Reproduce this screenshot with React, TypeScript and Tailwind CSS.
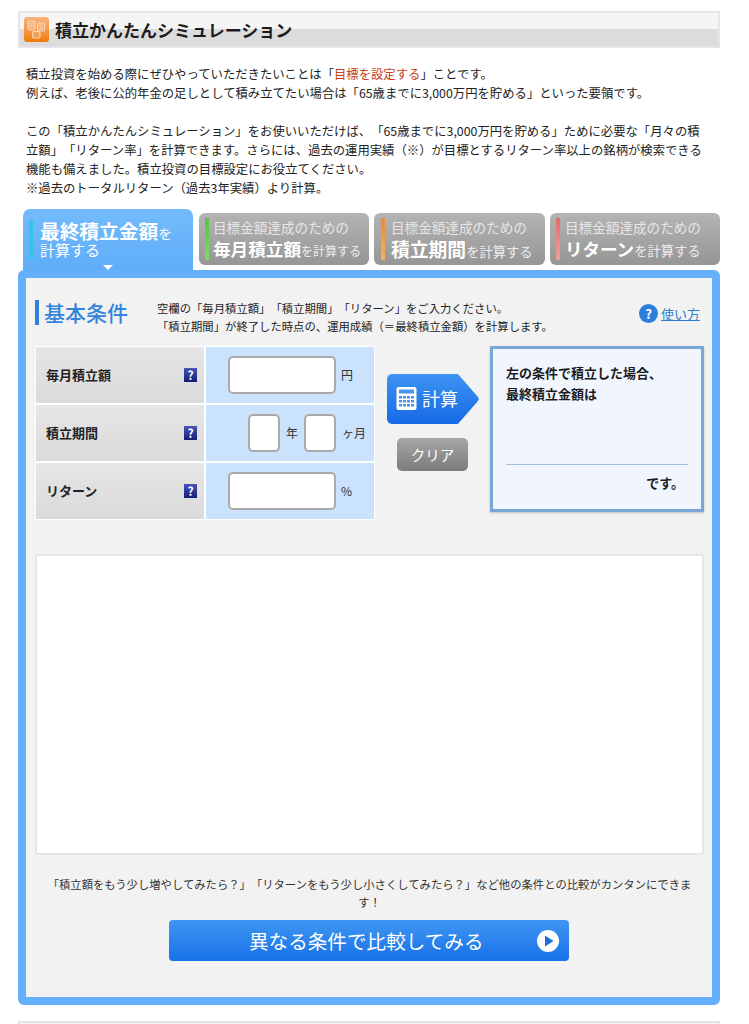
const HelpIcon = () => (
  <span className="flex h-[14px] w-[13px] items-center justify-center bg-gradient-to-b from-[#4a55b8] to-[#141c78] text-[12px] leading-none font-bold text-white">
    ?
  </span>
);

const Input = ({ className }: { className: string }) => (
  <div className={`rounded-[5px] border-2 border-[#aaaaaa] bg-white ${className}`} />
);

const Row = ({ label, children }: { label: string; children: React.ReactNode }) => (
  <div className="flex h-[56px] gap-[2px]">
    <div className="flex w-[168px] items-center justify-between bg-gradient-to-b from-[#e6e6e6] to-[#dadada] pl-[10px] pr-[7px]">
      <span className="text-[13px] font-bold text-[#222]">{label}</span>
      <HelpIcon />
    </div>
    <div className="flex w-[168px] items-center justify-end bg-[#cbe2fd] text-[12px] text-[#333]">{children}</div>
  </div>
);

interface GoalTabProps {
  box: string;
  color: string;
  big: string;
  bigSize: string;
  smallSize: string;
}

const GoalTab = ({ box, color, big, bigSize, smallSize }: GoalTabProps) => (
  <div className={`mt-[4px] flex h-[52px] rounded-[6px] bg-gradient-to-b from-[#b4b4b4] to-[#969696] py-[5px] ${box}`}>
    <div className={`w-[4px] ${color}`} />
    <div className="flex flex-col whitespace-nowrap text-white">
      <span className="text-[13.6px] leading-[18px] text-[#e6e6e6]">目標金額達成のための</span>
      <span className="flex items-baseline leading-[26px]">
        <span className={`font-bold ${bigSize}`}>{big}</span>
        <span className={`text-[#eeeeee] ${smallSize}`}>を計算する</span>
      </span>
    </div>
  </div>
);

export default function App() {
  return (
    <div className="h-[1024px] overflow-hidden bg-white font-['Noto_Sans_CJK_JP','Liberation_Sans',sans-serif] text-[#222] [text-spacing-trim:space-all]">
      <div className="ml-[18px] w-[702px] pt-[11px]">
        {/* Title */}
        <div className="flex h-[37px] items-center gap-[6px] border-2 border-[#e4e4ea] bg-[linear-gradient(to_bottom,#f5f5f5_0%,#f5f5f5_48%,#dcdcdc_48%,#dcdcdc_100%)] pl-[4px]">
          <svg width="25" height="25" viewBox="0 0 25 25">
            <defs>
              <linearGradient id="titleIcon" x1="0" y1="0" x2="0" y2="1">
                <stop offset="0" stopColor="#f9b47c" />
                <stop offset="0.5" stopColor="#f59a4c" />
                <stop offset="1" stopColor="#f07a08" />
              </linearGradient>
            </defs>
            <rect width="25" height="25" rx="3" fill="url(#titleIcon)" />
            <g fill="#ffffff" fillOpacity="0.18" stroke="#fcd9b8" strokeWidth="1.1">
              <rect x="4" y="4" width="7" height="9" rx="1.5" />
              <rect x="13.5" y="6" width="7" height="8" rx="1.5" />
              <rect x="8.5" y="14.5" width="7.5" height="6.5" rx="1.5" />
              <path d="M6 7h3M6 9.5h3M15.5 9h3M15.5 11.5h3" />
            </g>
          </svg>
          <h1 className="text-[17px] leading-none font-bold text-[#1c1c1c]">積立かんたんシミュレーション</h1>
        </div>

        {/* Intro */}
        <div className="mt-[17px] pl-[8px] text-[12.35px] leading-[19px] whitespace-nowrap text-[#222]">
          <p>
            積立投資を始める際にぜひやっていただきたいことは「<span className="text-[#c8401c]">目標を設定する</span>」ことです。
            <br />
            例えば、老後に公的年金の足しとして積み立てたい場合は「65歳までに3,000万円を貯める」といった要領です。
          </p>
          <p className="mt-[19px]">
            この「積立かんたんシミュレーション」をお使いいただけば、「65歳までに3,000万円を貯める」ために必要な「月々の積
            <br />
            立額」「リターン率」を計算できます。さらには、過去の運用実績（※）が目標とするリターン率以上の銘柄が検索できる
            <br />
            機能も備えました。積立投資の目標設定にお役立てください。
            <br />
            ※過去のトータルリターン（過去3年実績）より計算。
          </p>
        </div>

        {/* Tabs */}
        <div className="mt-[11px] flex h-[61px] gap-[5px] pl-[5px]">
          <div className="mr-[1px] flex h-[61px] w-[170px] gap-[7px] rounded-t-[7px] bg-gradient-to-b from-[#73bbfb] to-[#5fadfa] pt-[11px] pl-[6px]">
            <div className="h-[39px] w-[4px] bg-[#34c4e6]" />
            <div className="flex flex-col whitespace-nowrap text-white">
              <span className="flex items-baseline leading-[22px]">
                <span className="text-[19.7px] font-bold">最終積立金額</span>
                <span className="text-[14px]">を</span>
              </span>
              <span className="text-[15px] leading-[12px]">計算する</span>
              <div className="mt-[9px] ml-[63px] h-0 w-0 border-x-[5px] border-t-[5px] border-x-transparent border-t-white" />
            </div>
          </div>
          <GoalTab box="w-[170px] gap-[4px] pl-[6px]" color="bg-gradient-to-b from-[#5cc04a] to-[#7fd86a]" big="毎月積立額" bigSize="text-[17.6px]" smallSize="text-[12px]" />
          <GoalTab box="w-[171px] gap-[6px] pl-[7px]" color="bg-gradient-to-b from-[#ee8a2c] to-[#f6b060]" big="積立期間" bigSize="text-[18.8px]" smallSize="text-[13.3px]" />
          <GoalTab box="w-[170px] gap-[5px] pl-[6px]" color="bg-gradient-to-b from-[#e46a6a] to-[#f0a0a0]" big="リターン" bigSize="text-[17.5px]" smallSize="text-[13.3px]" />
        </div>

        {/* Panel */}
        <div className="h-[735px] rounded-[6px] border-8 border-[#66b0fb] bg-[#f2f2f2] pl-[9px] pr-[8px]">
          <div className="flex h-[68px] pt-[22px]">
            <h2 className="h-[25px] w-[122px] border-l-[4px] border-[#2f80dc] pl-[5px] text-[21px] leading-[25px] font-medium whitespace-nowrap text-[#3284dc]">基本条件</h2>
            <p className="mt-[-1px] w-[482px] text-[11.35px] leading-[18px] text-[#222]">
              空欄の「毎月積立額」「積立期間」「リターン」をご入力ください。
              <br />
              「積立期間」が終了した時点の、運用成績（＝最終積立金額）を計算します。
            </p>
            <a className="flex h-[20px] items-center gap-[3px] pt-[7px] text-[13px] text-[#2f7fd0] underline">
              <span className="flex h-[19px] w-[19px] shrink-0 items-center justify-center rounded-full bg-[#2c7fdc] text-[13px] leading-none font-bold text-white no-underline">
                ?
              </span>
              使い方
            </a>
          </div>

          <div className="flex">
            {/* Conditions table */}
            <div className="flex h-[174px] w-[340px] flex-col gap-[2px] bg-white p-[1px]">
              <Row label="毎月積立額">
                <Input className="h-[38px] w-[108px]" />
                <span className="w-[38px] pl-[5px]">円</span>
              </Row>
              <Row label="積立期間">
                <Input className="h-[38px] w-[32px]" />
                <span className="w-[24px] text-center">年</span>
                <Input className="h-[38px] w-[32px]" />
                <span className="w-[38px] pl-[6px] whitespace-nowrap">ヶ月</span>
              </Row>
              <Row label="リターン">
                <Input className="h-[38px] w-[108px]" />
                <span className="w-[38px] pl-[5px]">%</span>
              </Row>
            </div>

            {/* Buttons */}
            <div className="flex w-[115px] flex-col pt-[28px] pl-[12px]">
              <div className="flex h-[50px] w-[92px] items-center gap-[5px] bg-gradient-to-b from-[#3d94f2] to-[#1668e6] pb-[2px] pl-[9px] text-[18px] text-white [clip-path:polygon(0_8%,2%_2%,5%_0,77%_0,98%_44%,100%_50%,98%_56%,77%_100%,5%_100%,2%_98%,0_92%)]">
                <svg width="21" height="25" viewBox="0 0 21 24">
                  <rect x="0.5" y="0.5" width="20" height="23" rx="2" fill="#ffffff" />
                  <rect x="3" y="3" width="15" height="4" fill="#4b94ee" />
                  <g fill="#4b94ee">
                    <rect x="3" y="9.5" width="3" height="2.5" />
                    <rect x="7" y="9.5" width="3" height="2.5" />
                    <rect x="11" y="9.5" width="3" height="2.5" />
                    <rect x="15" y="9.5" width="3" height="2.5" />
                    <rect x="3" y="13.5" width="3" height="2.5" />
                    <rect x="7" y="13.5" width="3" height="2.5" />
                    <rect x="11" y="13.5" width="3" height="2.5" />
                    <rect x="15" y="13.5" width="3" height="2.5" />
                    <rect x="3" y="17.5" width="3" height="2.5" />
                    <rect x="7" y="17.5" width="3" height="2.5" />
                    <rect x="11" y="17.5" width="3" height="2.5" />
                    <rect x="15" y="17.5" width="3" height="2.5" />
                  </g>
                </svg>
                <span className="leading-none">計算</span>
              </div>
              <div className="mt-[14px] ml-[10px] flex h-[33px] w-[71px] items-center justify-center rounded-[5px] bg-gradient-to-b from-[#a6a6a6] to-[#7c7c7c] text-[14.5px] text-white">
                クリア
              </div>
            </div>

            {/* Result */}
            <div className="flex h-[166px] w-[214px] flex-col border-[3px] border-[#7ba7d8] bg-[#f0f5fe] px-[13px] pt-[13px] shadow-[0_1px_2px_rgba(0,0,0,0.2)]">
              <p className="text-[13px] leading-[21px] font-bold text-[#1c1c1c]">
                左の条件で積立した場合、
                <br />
                最終積立金額は
              </p>
              <div className="mt-[60px] border-t border-[#a4bedc] pt-[8px] pr-[4px] text-right text-[13px] leading-[20px] font-bold text-[#1c1c1c]">です。</div>
            </div>
          </div>

          {/* Chart area */}
          <div className="mt-[34px] h-[301px] rounded-[3px] border-2 border-[#e6e6e6] bg-white" />

          {/* Compare */}
          <p className="mt-[20px] text-center text-[11.34px] leading-[18px] whitespace-nowrap text-[#333]">
            「積立額をもう少し増やしてみたら？」「リターンをもう少し小さくしてみたら？」など他の条件との比較がカンタンにできま
            <br />
            す！
          </p>
          <div className="mt-[9px] ml-[134px] flex h-[41px] w-[400px] items-center rounded-[4px] bg-gradient-to-b from-[#3f96f2] to-[#1670e8] pl-[80px] text-white">
            <span className="w-[288px] text-[19.6px] leading-none whitespace-nowrap">異なる条件で比較してみる</span>
            <svg width="22" height="22" viewBox="0 0 22 22">
              <circle cx="11" cy="11" r="11" fill="#ffffff" />
              <path d="M8 5.5v11l8.5-5.5z" fill="#1c6fe0" />
            </svg>
          </div>
        </div>

        {/* Next section */}
        <div className="mt-[16px] h-[20px] border-2 border-[#e4e4ea] bg-[#f5f5f5]" />
      </div>
    </div>
  );
}
